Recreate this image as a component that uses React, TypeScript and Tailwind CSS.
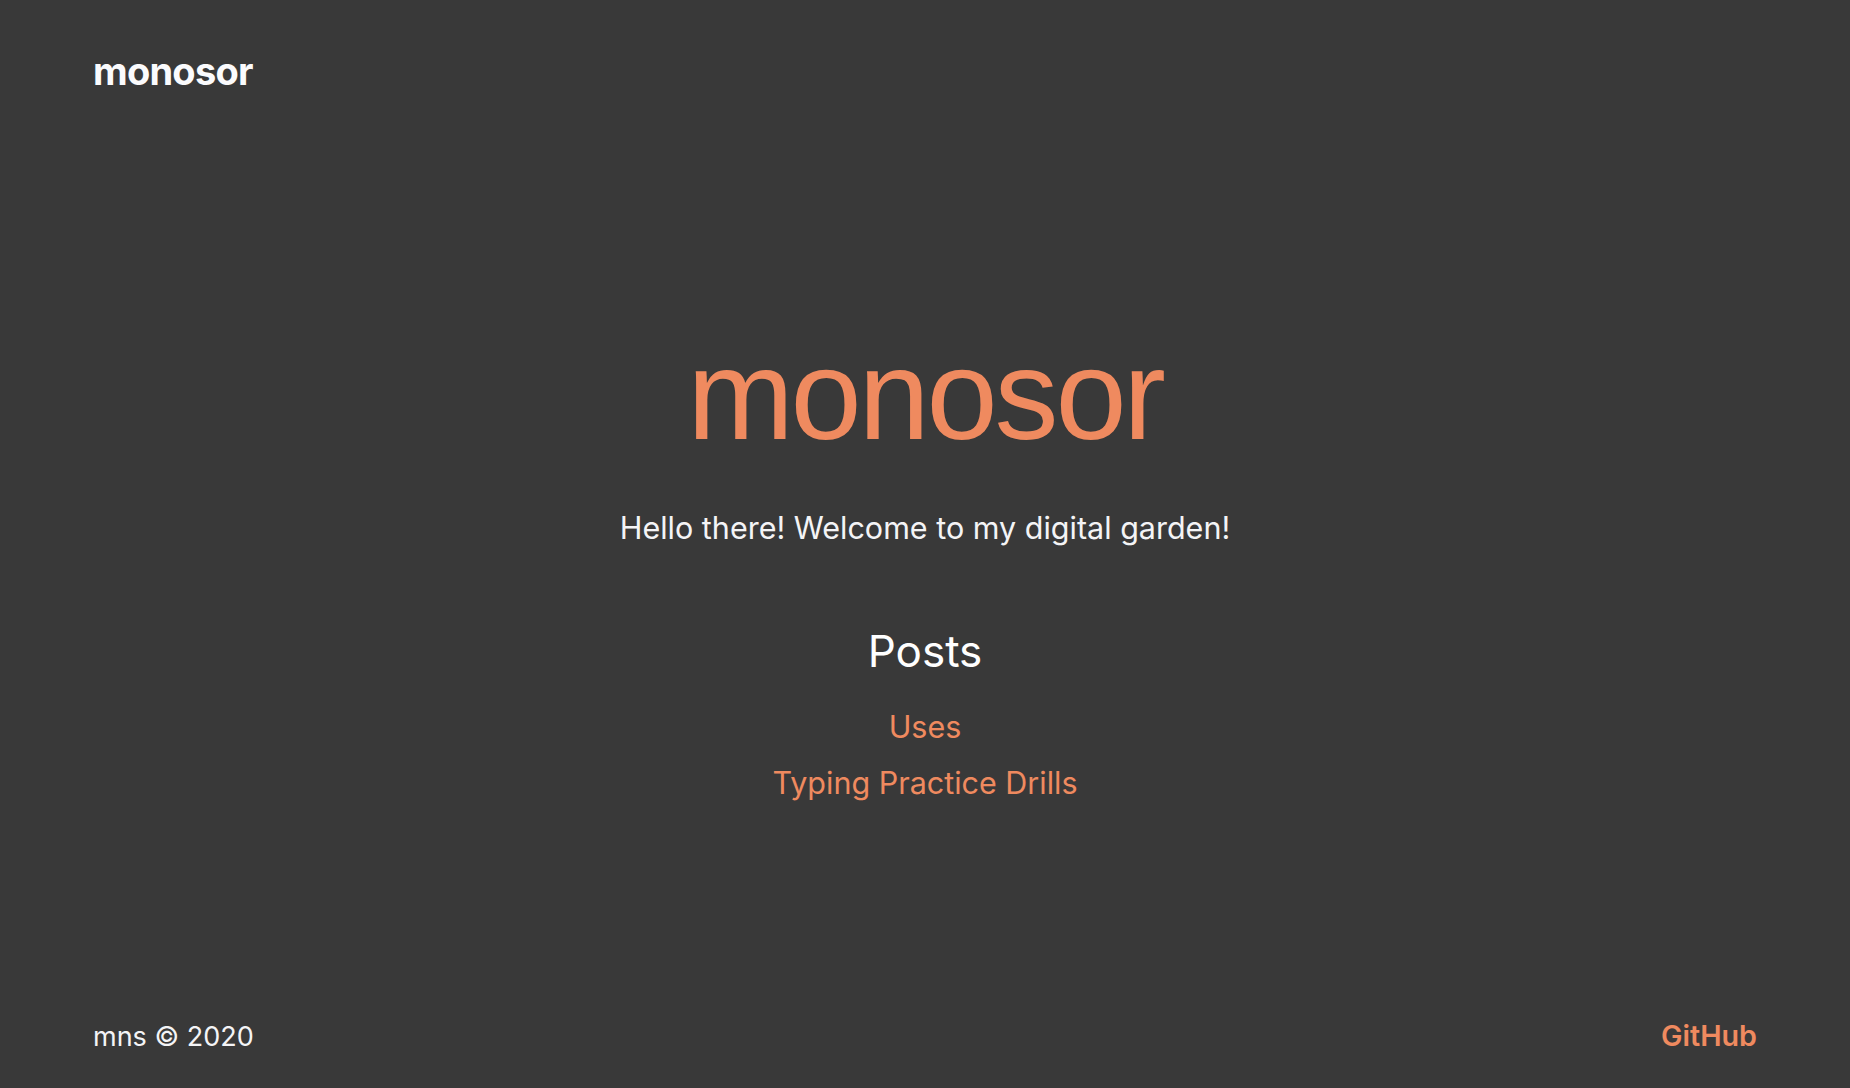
import React from "react";

const posts = [
  { title: "Uses", href: "#" },
  { title: "Typing Practice Drills", href: "#" },
];

export default function App() {
  return (
    <div className="min-h-screen flex flex-col bg-[#393939] text-white font-['Inter',sans-serif]">
      {/* Header */}
      <header className="pt-[52px] px-[93px]">
        <a href="#" className="text-[38px] leading-[38px] font-bold tracking-[-0.02em] text-[#fbfbfd]">
          monosor
        </a>
      </header>

      {/* Main */}
      <main className="flex-1 flex flex-col items-center">
        <h1 className="mt-[240px] text-[128px] leading-[128px] tracking-[-0.025em] text-[#ef8a5f] font-['Liberation_Sans',Arial,sans-serif]">
          monosor
        </h1>
        <p className="mt-[54px] text-[30.5px] leading-[30.5px] text-[#f4f4f6]">
          Hello there! Welcome to my digital garden!
        </p>

        <h2 className="mt-[85px] text-[44px] leading-[44px] text-white">Posts</h2>
        <ul className="mt-[39px] flex flex-col items-center gap-[24px]">
          {posts.map((p) => (
            <li key={p.title}>
              <a href={p.href} className="text-[30.5px] leading-[30.5px] text-[#ef8a5f]">
                {p.title}
              </a>
            </li>
          ))}
        </ul>
      </main>

      {/* Footer */}
      <footer className="flex justify-between items-end px-[93px] pb-[38px]">
        <span className="text-[27px] leading-[27px] text-[#f4f4f6]">mns © 2020</span>
        <a href="#" className="text-[28.7px] leading-[28.7px] font-semibold text-[#ef8a5f] translate-y-[1px]">
          GitHub
        </a>
      </footer>
    </div>
  );
}
